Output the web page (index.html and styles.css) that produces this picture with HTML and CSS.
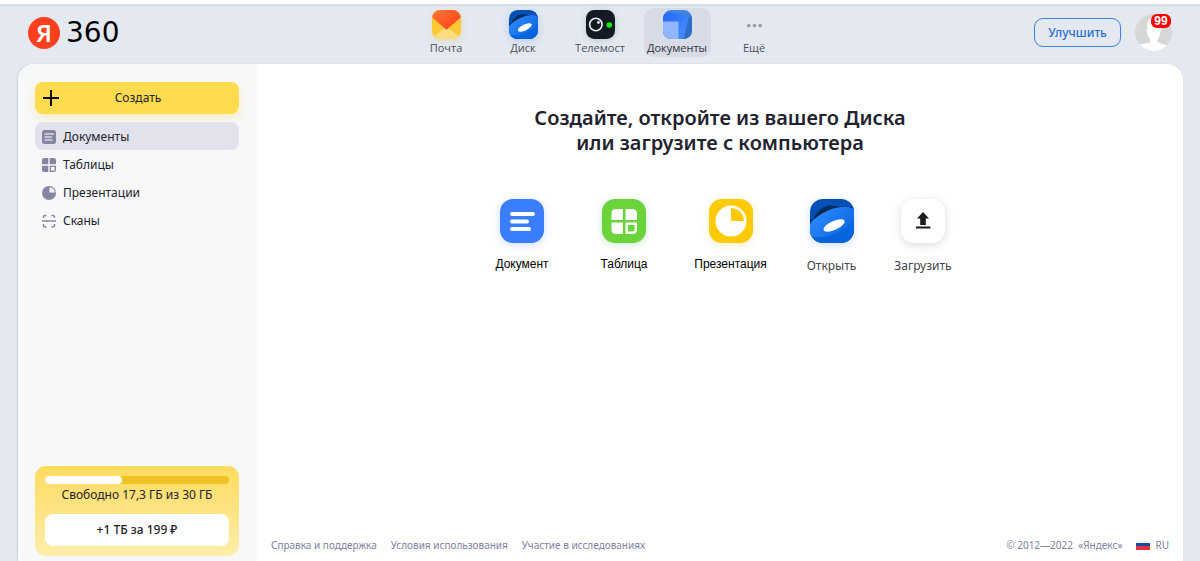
FILE: index.html
```html
<!DOCTYPE html>
<html lang="ru">
<head>
<meta charset="utf-8">
<title>Документы</title>
<meta name="viewport" content="width=device-width, initial-scale=1">
<link rel="stylesheet" href="styles.css">
</head>
<body>
<header class="header">
  <a class="logo" href="#"><span class="logo-mark">Я</span><span class="logo-text">360</span></a>
  <nav class="services">
    <a class="service" href="#">
      <svg class="service-icon glow-yellow" viewBox="0 0 28 28"><defs><clipPath id="round"><rect width="28" height="28" rx="8"/></clipPath><linearGradient id="flap" x1="0" y1="0" x2="1" y2="1"><stop offset="0" stop-color="#ff7a38"/><stop offset="1" stop-color="#fb3b15"/></linearGradient></defs><g clip-path="url(#round)"><rect width="28" height="28" fill="#ffc736"/><path d="M0 28V27L14 16 28 27V28Z" fill="#ffdc7d"/><path d="M0 0H28V7L14 19 0 7Z" fill="url(#flap)"/></g></svg>
      <span>Почта</span>
    </a>
    <a class="service" href="#">
      <svg class="service-icon glow-blue" viewBox="0 0 44 44"><defs><clipPath id="tile"><rect width="44" height="44" rx="13"/></clipPath><linearGradient id="disc" x1="0" y1="0" x2="1" y2="1"><stop offset="0" stop-color="#2f8bff"/><stop offset="1" stop-color="#0b66e0"/></linearGradient><g id="disk"><g clip-path="url(#tile)"><rect width="44" height="44" fill="#0550b5"/><path d="M0 25C9 8 16 5 25 7 32 9 38 6 44 9V20H0Z" fill="#032b5e"/><path d="M0 36V27C10 14 29 8 44 9V44H0Z" fill="#0665dc"/><ellipse cx="22" cy="23" rx="26" ry="12" transform="rotate(-24 22 23)" fill="url(#disc)"/><ellipse cx="24" cy="26.500" rx="11.500" ry="4.500" transform="rotate(-25 24 26.500)" fill="#fff"/></g></g></defs><use href="#disk"/></svg>
      <span>Диск</span>
    </a>
    <a class="service" href="#">
      <svg class="service-icon glow-dark" viewBox="0 0 28 28"><rect width="28" height="28" rx="8" fill="#131a23"/><circle cx="9.500" cy="14" r="6" fill="none" stroke="#e9edf0" stroke-width="1.600"/><circle cx="12" cy="12" r="1.400" fill="#e9edf0"/><circle cx="22.500" cy="14.500" r="2.700" fill="#0df205"/></svg>
      <span>Телемост</span>
    </a>
    <a class="service service-active" href="#">
      <svg class="service-icon" viewBox="0 0 28 28"><defs><linearGradient id="sheet" x1="0" y1="0" x2="1" y2="1"><stop offset="0" stop-color="#2168f5"/><stop offset="1" stop-color="#4d92ff"/></linearGradient><linearGradient id="back" x1="0" y1="0" x2="0" y2="1"><stop offset="0" stop-color="#4187e6"/><stop offset="1" stop-color="#2866c8"/></linearGradient></defs><g clip-path="url(#round)"><rect width="28" height="28" fill="url(#back)"/><path d="M0 5 6 2 25 7 20 28H0Z" fill="url(#sheet)"/><path d="M25 7 28 6V28H20Z" fill="#2f6cc8"/><path d="M0 11H15V28H0Z" fill="#8fb6ff"/></g></svg>
      <span>Документы</span>
    </a>
    <a class="service" href="#">
      <svg class="service-icon" viewBox="0 0 28 28" fill="#9da1a9"><circle cx="8.500" cy="15" r="1.800"/><circle cx="14" cy="15" r="1.800"/><circle cx="19.500" cy="15" r="1.800"/></svg>
      <span>Ещё</span>
    </a>
  </nav>
  <div class="account">
    <button class="upgrade" type="button">Улучшить</button>
    <button class="profile" type="button" aria-label="Профиль">
      <svg class="avatar" viewBox="0 0 37 37"><defs><clipPath id="face"><circle cx="18.500" cy="18.500" r="18.500"/></clipPath></defs><g clip-path="url(#face)"><rect width="37" height="37" fill="#d7d7d7"/><path d="M12.500 15C9 0 28 0 26 14L26.500 17 25 18C25 22 24 24 22.500 26V28C26 30 31 30 34 33V38H3V31C8 29 13 30 15 28V25C13 23 12.500 21 12.500 18.500L11 16.500Z" fill="#fff"/></g></svg>
      <span class="badge">99</span>
    </button>
  </div>
</header>
<div class="panel">
  <aside class="sidebar">
    <button class="create" type="button">
      <svg class="create-icon" viewBox="0 0 16 16"><path d="M8 0V16M0 8H16" stroke="#000" stroke-width="2"/></svg>
      <span>Создать</span>
    </button>
    <nav class="menu">
      <a class="menu-item menu-active" href="#">
        <svg class="menu-icon" viewBox="0 0 14 14"><rect width="14" height="14" rx="2.500" fill="#8686a2"/><path d="M3 4H11.500M3 7H9.500M3 10H10" stroke="#fff" stroke-width="1.200" stroke-linecap="round"/></svg>
        Документы</a>
      <a class="menu-item" href="#">
        <svg class="menu-icon" viewBox="0 0 14 14" fill="#8686a2"><path d="M2 0H6.300V6.300H0V2Q0 0 2 0ZM7.700 0H12Q14 0 14 2V6.300H7.700ZM0 7.700H6.300V14H2Q0 14 0 12Z"/><path d="M8.400 8.400H13.300V12Q13.300 13.300 12 13.300H8.400Z" fill="none" stroke="#8686a2" stroke-width="1.400"/></svg>
        Таблицы</a>
      <a class="menu-item" href="#">
        <svg class="menu-icon" viewBox="0 0 14 14"><circle cx="7" cy="7" r="7" fill="#8686a2"/><path d="M7.500 1.200A5.500 5.500 0 0 1 12.800 6.500H7.500Z" fill="#f7f8fa"/></svg>
        Презентации</a>
      <a class="menu-item" href="#">
        <svg class="menu-icon" viewBox="0 0 14 14" fill="none" stroke="#8686a2" stroke-width="1.500"><path d="M0 7H14M1.500 4V3Q1.500 1.500 3 1.500H4.500M9.500 1.500H11Q12.500 1.500 12.500 3V4M1.500 10V11.500Q1.500 13 3 13H4.500M9.500 13H11Q12.500 13 12.500 11.500V10"/></svg>
        Сканы</a>
    </nav>
    <section class="storage">
      <div class="meter"><div class="meter-fill"></div></div>
      <p class="storage-text">Свободно 17,3 ГБ из 30 ГБ</p>
      <button class="storage-button" type="button">+1 ТБ за 199 ₽</button>
    </section>
  </aside>
  <main class="main">
    <h1 class="title">Создайте, откройте из вашего Диска<br>или загрузите с компьютера</h1>
    <div class="actions">
      <button class="action" type="button">
        <svg class="action-icon glow-blue" viewBox="0 0 44 44"><rect width="44" height="44" rx="13" fill="#3a7dff"/><path d="M12 15H33M12 22.500H27M12 30H29" stroke="#fff" stroke-width="4" stroke-linecap="round"/></svg>
        <span>Документ</span>
      </button>
      <button class="action" type="button">
        <svg class="action-icon glow-green" viewBox="0 0 44 44"><rect width="44" height="44" rx="13" fill="#6bd43b"/><path d="M14 10H21V21H9.500V14.500Q9.500 10 14 10ZM23.500 10H30Q35 10 35 14.500V21H23.500ZM9.500 23.500H21V35H14Q9.500 35 9.500 30.500Z" fill="#fff"/><path d="M24.700 24.700H33.800V30.500Q33.800 33.800 30.500 33.800H24.700Z" fill="none" stroke="#fff" stroke-width="2.400"/></svg>
        <span>Таблица</span>
      </button>
      <button class="action" type="button">
        <svg class="action-icon glow-yellow" viewBox="0 0 44 44"><rect width="44" height="44" rx="13" fill="#ffcb00"/><circle cx="22" cy="22" r="15.500" fill="#fff"/><path d="M22 9A13 13 0 0 1 35 22H22Z" fill="#ffcb00"/></svg>
        <span>Презентация</span>
      </button>
      <button class="action action-file" type="button">
        <svg class="action-icon glow-blue" viewBox="0 0 44 44"><use href="#disk"/></svg>
        <span>Открыть</span>
      </button>
      <button class="action action-file" type="button">
        <svg class="action-icon glow-gray" viewBox="0 0 44 44"><rect width="44" height="44" rx="13" fill="#fff"/><path d="M22 13 28 19.500H24.800V26H19.200V19.500H16ZM15 27.500H29.500V29.500H15Z" fill="#1b1b1d"/></svg>
        <span>Загрузить</span>
      </button>
    </div>
    <footer class="footer">
      <a href="#">Справка и поддержка</a>
      <a href="#">Условия использования</a>
      <a href="#">Участие в исследованиях</a>
      <span class="copyright">© 2012—2022&nbsp; «Яндекс»</span>
      <button class="language" type="button"><svg class="flag" viewBox="0 0 14 9"><path d="M0 0H14V3H0Z" fill="#f2f3f7"/><path d="M0 2H14V6H0Z" fill="#1250a4"/><path d="M0 5H14V9H0Z" fill="#e23140"/></svg>RU</button>
    </footer>
  </main>
</div>
</body>
</html>
```
FILE: styles.css
```css
* { box-sizing: border-box; }

body {
  margin: 0;
  min-height: 100vh;
  display: flex;
  flex-direction: column;
  border-top: 4px solid #fff;
  background: #e4e9f1;
  color: #21222e;
  font: 12px/16px "Noto Sans", sans-serif;
}

a { color: inherit; text-decoration: none; }

button {
  padding: 0;
  border: 0;
  background: none;
  color: inherit;
  font: inherit;
  cursor: pointer;
}

svg { display: block; flex: none; }

.header {
  display: grid;
  grid-template-columns: 1fr auto 1fr;
  align-items: center;
  height: 60px;
  padding: 0 28px;
  border-top: 2px solid #dadde3;
}

.logo {
  display: flex;
  align-items: center;
  gap: 6px;
  padding-bottom: 5px;
}

.logo-mark {
  width: 32px;
  height: 32px;
  border-radius: 50%;
  background: #fc3f1d;
  color: #fff;
  font: 600 24px/31px "Noto Sans", sans-serif;
  text-align: center;
}

.logo-text {
  color: #000;
  font: 28px/32px "DejaVu Sans", sans-serif;
}

.services { display: flex; gap: 10px; padding-bottom: 5px; }

.service {
  display: flex;
  flex-direction: column;
  align-items: center;
  width: 67px;
  height: 49px;
  padding-top: 2px;
  border-radius: 9px;
  color: #4c4d55;
  font-family: "Open Sans", sans-serif;
  font-size: 11px;
  line-height: 18px;
}

.service-active { background: #d8dce7; color: #303138; font-weight: 500; }
.service-icon { width: 29px; height: 29px; overflow: visible; }

.glow-blue { filter: drop-shadow(0 2px 4px rgb(58 125 255 / 25%)); }
.glow-green { filter: drop-shadow(0 2px 4px rgb(60 180 110 / 25%)); }
.glow-yellow { filter: drop-shadow(0 2px 4px rgb(225 180 50 / 25%)); }
.glow-gray { filter: drop-shadow(0 2px 4px rgb(0 0 0 / 14%)); }
.glow-dark { filter: drop-shadow(0 1px 3px rgb(40 110 90 / 25%)); }

.account {
  display: flex;
  justify-content: flex-end;
  align-items: center;
  gap: 14px;
  padding-bottom: 5px;
}

.upgrade {
  width: 87px;
  height: 29px;
  border: 1px solid #3a82dc;
  border-radius: 9px;
  color: #2a6bd0;
  font-weight: 500;
}

.profile { position: relative; }
.avatar { width: 37px; height: 37px; }

.badge {
  position: absolute;
  top: 0;
  right: 1px;
  width: 20px;
  height: 14px;
  border-radius: 6px;
  background: #f00;
  color: #fff;
  font: bold 12px/14px "Liberation Sans", sans-serif;
}

.panel {
  flex: 1;
  display: flex;
  margin: 0 17px 0 18px;
  overflow: hidden;
  border-radius: 16px 16px 0 0;
  background: #fff;
  box-shadow: -1px 0 2px rgb(100 115 140 / 20%);
}

.sidebar {
  display: flex;
  flex-direction: column;
  width: 239px;
  padding: 18px 18px 5px 17px;
  background: #f7f8fa;
}

.create {
  display: grid;
  grid-template-columns: 16px 1fr 14px;
  align-items: center;
  height: 32px;
  padding: 0 8px;
  border-radius: 8px;
  background: #ffdb4d;
  box-shadow: 0 4px 10px rgb(255 219 77 / 35%);
}

.create-icon { width: 16px; height: 16px; }
.menu { margin-top: 8px; }

.menu-item {
  display: flex;
  align-items: center;
  gap: 7px;
  height: 28px;
  padding: 1px 7px 0;
  border-radius: 8px;
}

.menu-active { background: #e2e2ec; }
.menu-icon { width: 14px; height: 14px; }

.storage {
  margin-top: auto;
  padding: 10px;
  border-radius: 11px;
  background: linear-gradient(#ffdb5e, #ffedaa);
  text-align: center;
}

.meter { height: 8px; border-radius: 4px; background: #efc322; }
.meter-fill { width: 42%; height: 100%; border-radius: 4px; background: #fff; }
.storage-text { margin: 3px 0 11px; }

.storage-button {
  width: 100%;
  height: 32px;
  border-radius: 8px;
  background: #fff;
  font-weight: 500;
}

.main {
  flex: 1;
  display: flex;
  flex-direction: column;
  min-width: 0;
  padding: 41px 14px 8px;
}

.title {
  margin: 0;
  font-size: 20px;
  font-weight: 600;
  line-height: 25px;
  text-align: center;
}

.actions {
  display: grid;
  grid-template-columns: 104px 100px 113px 89px 94px;
  justify-content: center;
  margin-top: 44px;
}

.action {
  display: flex;
  flex-direction: column;
  align-items: center;
  gap: 13px;
  color: #000;
  font-family: "Liberation Sans", sans-serif;
}

.action-file { gap: 15px; color: #43444e; font-family: "Noto Sans", sans-serif; }
.action-icon { width: 44px; height: 44px; overflow: visible; }

.footer {
  display: flex;
  align-items: center;
  gap: 14px;
  margin-top: auto;
  color: #8081a0;
  font-size: 10px;
}

.copyright { margin-left: auto; }
.language { display: flex; align-items: center; gap: 5px; }
.flag { width: 14px; height: 9px; }
```
